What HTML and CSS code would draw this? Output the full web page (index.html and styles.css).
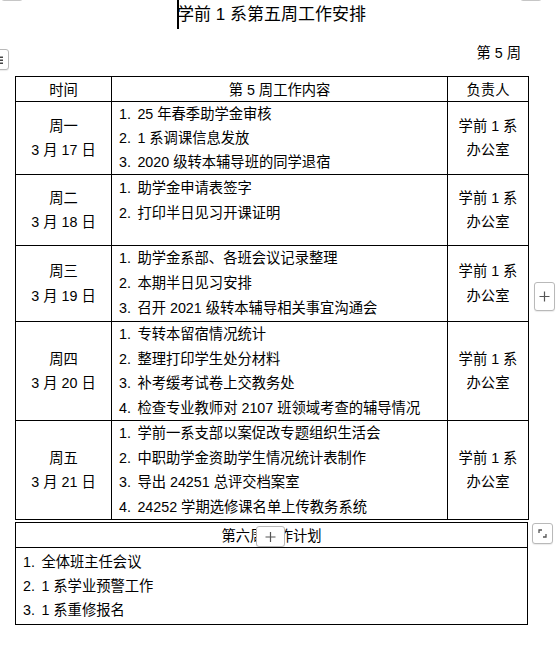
FILE: index.html
```html
<!DOCTYPE html>
<html lang="zh-CN">
<head>
<meta charset="utf-8">
<title>学前 1 系第五周工作安排</title>
<link rel="stylesheet" href="styles.css">
</head>
<body>
<div class="page">
  <div class="edge-btn edge-left"></div>
  <div class="edge-btn edge-right"></div>

  <h1 class="title"><span class="title-text">学前 1 系第五周工作安排</span></h1>
  <div class="week">第 5 周</div>

  <table class="plan">
    <colgroup><col class="c1"><col class="c2"><col class="c3"></colgroup>
    <thead>
      <tr class="hd"><th>时间</th><th>第 5 周工作内容</th><th>负责人</th></tr>
    </thead>
    <tbody>
      <tr class="r1">
        <td class="day">周一<br>3 月 17 日</td>
        <td class="tasks">
          <p><span class="n">1.</span>25 年春季助学金审核</p>
          <p><span class="n">2.</span>1 系调课信息发放</p>
          <p><span class="n">3.</span>2020 级转本辅导班的同学退宿</p>
        </td>
        <td class="owner">学前 1 系<br>办公室</td>
      </tr>
      <tr class="r2">
        <td class="day">周二<br>3 月 18 日</td>
        <td class="tasks top">
          <p><span class="n">1.</span>助学金申请表签字</p>
          <p><span class="n">2.</span>打印半日见习开课证明</p>
        </td>
        <td class="owner">学前 1 系<br>办公室</td>
      </tr>
      <tr class="r3">
        <td class="day">周三<br>3 月 19 日</td>
        <td class="tasks">
          <p><span class="n">1.</span>助学金系部、各班会议记录整理</p>
          <p><span class="n">2.</span>本期半日见习安排</p>
          <p><span class="n">3.</span>召开 2021 级转本辅导相关事宜沟通会</p>
        </td>
        <td class="owner">学前 1 系<br>办公室</td>
      </tr>
      <tr class="r4">
        <td class="day">周四<br>3 月 20 日</td>
        <td class="tasks">
          <p><span class="n">1.</span>专转本留宿情况统计</p>
          <p><span class="n">2.</span>整理打印学生处分材料</p>
          <p><span class="n">3.</span>补考缓考试卷上交教务处</p>
          <p><span class="n">4.</span>检查专业教师对 2107 班领域考查的辅导情况</p>
        </td>
        <td class="owner">学前 1 系<br>办公室</td>
      </tr>
      <tr class="r5">
        <td class="day">周五<br>3 月 21 日</td>
        <td class="tasks">
          <p><span class="n">1.</span>学前一系支部以案促改专题组织生活会</p>
          <p><span class="n">2.</span>中职助学金资助学生情况统计表制作</p>
          <p><span class="n">3.</span>导出 24251 总评交档案室</p>
          <p><span class="n">4.</span>24252 学期选修课名单上传教务系统</p>
        </td>
        <td class="owner">学前 1 系<br>办公室</td>
      </tr>
    </tbody>
  </table>

  <table class="next">
    <thead><tr class="hd"><th>第六周工作计划</th></tr></thead>
    <tbody>
      <tr>
        <td class="tasks list">
          <p><span class="n">1.</span>全体班主任会议</p>
          <p><span class="n">2.</span>1 系学业预警工作</p>
          <p><span class="n">3.</span>1 系重修报名</p>
        </td>
      </tr>
    </tbody>
  </table>

  <div class="tool handle">
    <svg width="21" height="21" viewBox="0 0 21 21"><rect x="11" y="6.5" width="3" height="1.5" fill="#444"/><rect x="11" y="9.5" width="3" height="1.5" fill="#444"/><rect x="11" y="12.5" width="3" height="1.5" fill="#444"/></svg>
  </div>
  <div class="tool plus-side">
    <svg width="19" height="27" viewBox="0 0 19 27"><path d="M9.5 8.5v10M4.5 13.5h10" stroke="#555" stroke-width="1.2" fill="none"/></svg>
  </div>
  <div class="tool plus-bottom">
    <svg width="27" height="19" viewBox="0 0 27 19"><path d="M13.5 5v10M8.5 10h10" stroke="#555" stroke-width="1.2" fill="none"/></svg>
  </div>
  <div class="tool corner">
    <svg width="19" height="19" viewBox="0 0 19 19"><path d="M6 9V6h3M10 13h3v-3" stroke="#555" stroke-width="1.3" fill="none"/></svg>
  </div>
</div>
</body>
</html>
```

FILE: styles.css
```css
* { box-sizing: border-box; }
html, body { margin: 0; padding: 0; background: #fff; }
body {
  font-family: "Liberation Sans", "Noto Sans CJK SC", sans-serif;
  font-size: 14.3px;
  color: #000;
}
.page {
  position: relative;
  width: 558px;
  height: 649px;
  overflow: hidden;
  padding-left: 15px;
}
.title {
  margin: 0;
  width: 513px;
  font-size: 17px;
  font-weight: normal;
  line-height: 30px;
  text-align: center;
}
.title-text {
  position: relative;
  display: inline-block;
}
.title-text::before {
  content: "";
  position: absolute;
  left: 0;
  top: 0;
  width: 2px;
  height: 29px;
  background: #000;
}
.week {
  width: 513px;
  margin-top: 13px;
  padding-right: 7px;
  line-height: 20px;
  text-align: right;
}
table {
  border-collapse: collapse;
  table-layout: fixed;
  width: 513px;
}
.plan { margin-top: 13px; }
.next { margin-top: 2px; }
col.c1 { width: 96px; }
col.c2 { width: 336px; }
col.c3 { width: 81px; }
th, td {
  border: 1px solid #000;
  padding: 0;
  vertical-align: middle;
}
th {
  font-weight: normal;
  text-align: center;
  line-height: 22px;
  padding-top: 2px;
}
tr.hd { height: 25px; }
tr.r1 { height: 73px; line-height: 24px; }
tr.r2 { height: 71px; line-height: 24px; }
tr.r3 { height: 75px; line-height: 25px; }
tr.r4 { height: 99px; line-height: 24.6px; }
tr.r5 { height: 99px; line-height: 24.5px; }
.day, .owner { text-align: center; }
.tasks { padding: 0 7px; }
.tasks.top { vertical-align: top; padding-top: 1px; line-height: 25px; }
.tasks p { margin: 0; white-space: nowrap; }
.n { display: inline-block; width: 18.4px; }
.list { padding: 2px 7px 2px; line-height: 24px; }

.tool {
  position: absolute;
  background: #fff;
  border: 1px solid #b9b9b9;
  border-radius: 3px;
  box-shadow: 0 1px 1px rgba(0,0,0,0.08);
}
.tool svg { display: block; }
.handle { left: -12px; top: 49px; width: 21px; height: 21px; }
.plus-side { left: 534px; top: 282px; width: 21px; height: 29px; }
.plus-bottom { left: 256px; top: 526px; width: 29px; height: 21px; }
.corner { left: 532px; top: 523px; width: 21px; height: 21px; }
.edge-btn {
  position: absolute;
  top: -20px;
  height: 21px;
  width: 22px;
  border: 1px solid #c6c6c6;
  border-radius: 3px;
  background: #fff;
}
.edge-left { left: 1px; }
.edge-right { left: 520px; }
```
